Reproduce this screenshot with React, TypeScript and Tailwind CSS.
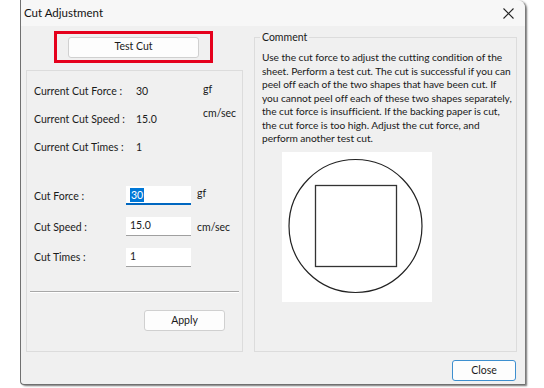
import React from "react";

const font = { fontFamily: 'Lato, "Noto Sans", sans-serif' };

function Field({ value, selected }: { value: string; selected?: boolean }) {
  return (
    <div
      className={
        "w-[65px] h-[19px] bg-white flex items-center pl-[4px] text-[10.5px] text-[#1a1a1a] " +
        (selected ? "border-b-2 border-[#0067c0]" : "border-b border-[#a0a0a0]")
      }
    >
      {selected ? <span className="bg-[#0078d7] text-white px-[1px] leading-[14px]">{value}</span> : value}
    </div>
  );
}

const commentLines = [
  "Use the cut force to adjust the cutting condition of the",
  "sheet. Perform a test cut. The cut is successful if you can",
  "peel off each of the two shapes that have been cut. If",
  "you cannot peel off each of these two shapes separately,",
  "the cut force is insufficient. If the backing paper is cut,",
  "the cut force is too high. Adjust the cut force, and",
  "perform another test cut.",
];

export default function App() {
  return (
    <div className="w-[544px] h-[388px] bg-white overflow-hidden" style={font}>
      <div className="ml-[20px] w-[505px] h-[385px] bg-[#f0f0f0] border-l border-b border-[#707070] rounded-tr-[8px] rounded-bl-[4px] shadow-[2px_1px_2px_rgba(0,0,0,0.55)] flex flex-col text-[#1a1a1a]">
        <div className="h-[26px] bg-[#f7f7f7] rounded-tr-[8px] flex items-center justify-between pl-[3px] pr-[11px]">
          <span className="text-[11.5px] text-[#111]">Cut Adjustment</span>
          <svg width="11" height="11" viewBox="0 0 11 11" className="mt-[1px]">
            <path d="M0.5 0.5 L10.5 10.5 M10.5 0.5 L0.5 10.5" stroke="#222" strokeWidth="1.1" />
          </svg>
        </div>
        <div className="flex flex-1">
          <div className="w-[233px] pl-[5px] flex flex-col">
            <div className="ml-[28px] mt-[5px] w-[159px] h-[32px] border-[3px] border-[#e5001c] flex items-center justify-center">
              <div className="w-[131px] h-[21px] bg-[#fdfdfd] border border-[#d0d0d0] rounded-[3px] flex items-center justify-center text-[10.5px]">
                Test Cut
              </div>
            </div>
            <div className="mt-[7px] w-[217px] h-[282px] border border-[#dcdcdc] flex flex-col text-[10.5px]">
              <div className="grid grid-cols-[102px_67px_auto] pl-[7px] pt-[12px] gap-y-[11px]">
                <span className="h-[17px] flex items-center">Current Cut Force :</span>
                <span className="h-[17px] flex items-center">30</span>
                <span className="h-[17px] flex items-center -mt-[2px]">gf</span>
                <span className="h-[17px] flex items-center">Current Cut Speed :</span>
                <span className="h-[17px] flex items-center">15.0</span>
                <span className="h-[17px] flex items-center -mt-[6px]">cm/sec</span>
                <span className="h-[17px] flex items-center">Current Cut Times :</span>
                <span className="h-[17px] flex items-center">1</span>
                <span />
              </div>
              <div className="grid grid-cols-[92px_71px_auto] pl-[7px] mt-[30px] gap-y-[12px] items-center">
                <span className="mt-[3px]">Cut Force :</span>
                <Field value="30" selected />
                <span className="-mt-[3px]">gf</span>
                <span className="mt-[2px]">Cut Speed :</span>
                <Field value="15.0" />
                <span className="mt-[2px]">cm/sec</span>
                <span className="mt-[1px]">Cut Times :</span>
                <Field value="1" />
                <span />
              </div>
              <div className="mt-[24px] mx-[3px] h-[2px] border-t border-[#a8a8a8] border-b border-b-white" />
              <div className="flex justify-end pr-[17px] mt-[17px]">
                <div className="w-[81px] h-[21px] bg-[#fdfdfd] border border-[#d0d0d0] rounded-[3px] flex items-center justify-center">
                  Apply
                </div>
              </div>
            </div>
          </div>
          <div className="mt-[11px] w-[263px] h-[315px] border border-[#dcdcdc] relative">
            <span className="absolute -top-[8px] left-[5px] bg-[#f0f0f0] px-[2px] text-[10.5px]">Comment</span>
            <div className="mt-[13px] ml-[7px] mr-[2px] text-[10.2px] tracking-[-0.05px] leading-[13.5px] whitespace-nowrap flex flex-col">
              {commentLines.map((l) => (
                <span key={l}>{l}</span>
              ))}
            </div>
            <div className="ml-[27px] mt-[6px] w-[150px] h-[150px] bg-white">
              <svg width="150" height="150" viewBox="0 0 150 150">
                <circle cx="73.5" cy="74" r="66.5" fill="none" stroke="#222" strokeWidth="1.2" />
                <rect x="33.5" y="33.5" width="81" height="81" fill="none" stroke="#333" strokeWidth="1.3" />
              </svg>
            </div>
          </div>
        </div>
        <div className="flex justify-end pr-[9px] pb-[3px]">
          <div className="w-[64px] h-[21px] bg-[#fdfdfd] border border-[#3d8fcf] rounded-[3px] flex items-center justify-center text-[10.5px]">
            Close
          </div>
        </div>
      </div>
    </div>
  );
}
